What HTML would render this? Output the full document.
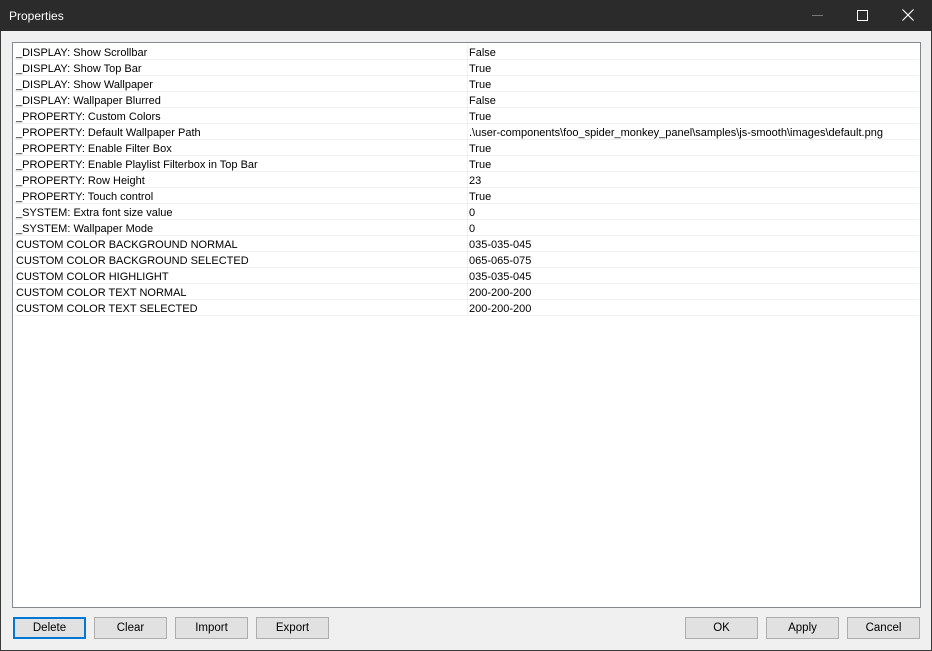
<!DOCTYPE html>
<html><head><style>
*{margin:0;padding:0;box-sizing:border-box}
body{width:932px;height:651px;background:#f0f0f0;font-family:"Liberation Sans",sans-serif;font-size:11px;color:#000;position:relative;overflow:hidden}
.title{position:absolute;left:0;top:0;width:932px;height:31px;background:#2b2b2b;color:#fff;font-size:12px}
.title span{position:absolute;left:9px;top:9px}
.frame{position:absolute;left:0;top:31px;width:932px;height:620px;border:1px solid #3a3a3a;border-top:none}
.list{position:absolute;left:12px;top:42px;width:909px;height:566px;background:#fff;border:1px solid #828790}
.row{position:absolute;left:1px;width:905px;height:16px;border-bottom:1px solid #f0f0f0}
.row .a{position:absolute;left:2px;top:3px;white-space:nowrap}
.row .b{position:absolute;left:455px;top:3px;white-space:nowrap}
.vl{position:absolute;left:454px;top:1px;width:1px;height:272px;background:#f0f0f0}
.btn{position:absolute;top:617px;width:73px;height:22px;background:#e1e1e1;border:1px solid #adadad;text-align:center;line-height:21px;font-size:11.5px}
</style></head><body>
<div class="frame"></div>
<div class="title"><span>Properties</span>
<div style="position:absolute;left:812px;top:15px;width:11px;height:1px;background:#777"></div>
<div style="position:absolute;left:857px;top:10px;width:11px;height:11px;border:1px solid #fff"></div>
<svg style="position:absolute;left:902px;top:9px" width="12" height="12"><path d="M0.5 0.5L11.5 11.5M11.5 0.5L0.5 11.5" stroke="#fff" stroke-width="1.2"/></svg>
</div>
<div class="list">
<div class="vl"></div>
<div class="row" style="top:1px"><span class="a">_DISPLAY: Show Scrollbar</span><span class="b">False</span></div>
<div class="row" style="top:17px"><span class="a">_DISPLAY: Show Top Bar</span><span class="b">True</span></div>
<div class="row" style="top:33px"><span class="a">_DISPLAY: Show Wallpaper</span><span class="b">True</span></div>
<div class="row" style="top:49px"><span class="a">_DISPLAY: Wallpaper Blurred</span><span class="b">False</span></div>
<div class="row" style="top:65px"><span class="a">_PROPERTY: Custom Colors</span><span class="b">True</span></div>
<div class="row" style="top:81px"><span class="a">_PROPERTY: Default Wallpaper Path</span><span class="b">.\user-components\foo_spider_monkey_panel\samples\js-smooth\images\default.png</span></div>
<div class="row" style="top:97px"><span class="a">_PROPERTY: Enable Filter Box</span><span class="b">True</span></div>
<div class="row" style="top:113px"><span class="a">_PROPERTY: Enable Playlist Filterbox in Top Bar</span><span class="b">True</span></div>
<div class="row" style="top:129px"><span class="a">_PROPERTY: Row Height</span><span class="b">23</span></div>
<div class="row" style="top:145px"><span class="a">_PROPERTY: Touch control</span><span class="b">True</span></div>
<div class="row" style="top:161px"><span class="a">_SYSTEM: Extra font size value</span><span class="b">0</span></div>
<div class="row" style="top:177px"><span class="a">_SYSTEM: Wallpaper Mode</span><span class="b">0</span></div>
<div class="row" style="top:193px"><span class="a">CUSTOM COLOR BACKGROUND NORMAL</span><span class="b">035-035-045</span></div>
<div class="row" style="top:209px"><span class="a">CUSTOM COLOR BACKGROUND SELECTED</span><span class="b">065-065-075</span></div>
<div class="row" style="top:225px"><span class="a">CUSTOM COLOR HIGHLIGHT</span><span class="b">035-035-045</span></div>
<div class="row" style="top:241px"><span class="a">CUSTOM COLOR TEXT NORMAL</span><span class="b">200-200-200</span></div>
<div class="row" style="top:257px"><span class="a">CUSTOM COLOR TEXT SELECTED</span><span class="b">200-200-200</span></div>
</div>
<div class="btn" style="left:13px;border:2px solid #0078d7;line-height:19px">Delete</div>
<div class="btn" style="left:94px">Clear</div>
<div class="btn" style="left:175px">Import</div>
<div class="btn" style="left:256px">Export</div>
<div class="btn" style="left:685px">OK</div>
<div class="btn" style="left:766px">Apply</div>
<div class="btn" style="left:847px">Cancel</div>
</body></html>
